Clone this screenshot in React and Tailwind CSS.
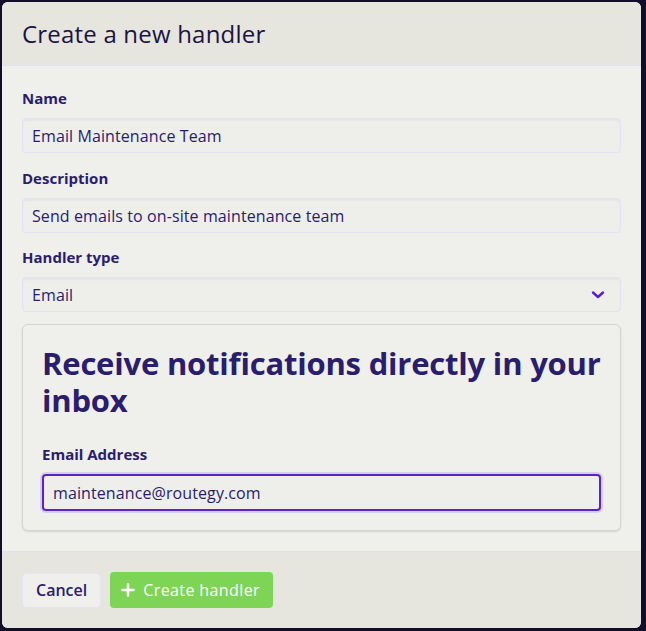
import React from "react";

const font = { fontFamily: "'Open Sans', 'Noto Sans', sans-serif" };

function Label({ children, className = "" }) {
  return (
    <div className={"text-[15px] font-bold text-[#2a1d6e] leading-[20px] " + className}>{children}</div>
  );
}

function Field({ children, right }) {
  return (
    <div className="h-[35px] rounded-[4px] border border-[#e4e0f6] bg-[#eeeeea] shadow-[inset_0_2px_2px_rgba(0,0,0,0.04)] flex items-center px-[9px] text-[16px] font-medium text-[#2a1d6e]">
      <span className="flex-1 tracking-[0.1px]">{children}</span>
      {right}
    </div>
  );
}

export default function App() {
  return (
    <div className="w-[646px] h-[631px] bg-[#120e29] p-[2px] pr-[5px] pb-[3px]" style={font}>
      <div className="w-full h-full rounded-[6px] overflow-hidden flex flex-col bg-[#efefeb]">
        <div className="h-[64px] bg-[#e6e6df] border-b border-[#e2def4] flex items-center px-[20px]">
          <h1 className="text-[24px] text-[#1b1442] font-normal tracking-[0.2px]">Create a new handler</h1>
        </div>
        <div className="flex-1 px-[20px] pt-[22px] flex flex-col">
          <Label>Name</Label>
          <div className="mt-[10px]"><Field>Email Maintenance Team</Field></div>
          <Label className="mt-[15px]">Description</Label>
          <div className="mt-[10px]"><Field>Send emails to on-site maintenance team</Field></div>
          <Label className="mt-[14px]">Handler type</Label>
          <div className="mt-[10px]">
            <Field
              right={
                <svg width="14" height="10" viewBox="0 0 14 10" className="mr-[6px]">
                  <path d="M2 2.5 L7 7 L12 2.5" fill="none" stroke="#5b1fd0" strokeWidth="2.4" strokeLinecap="round" strokeLinejoin="round" />
                </svg>
              }
            >
              Email
            </Field>
          </div>
          <div className="mt-[12px] rounded-[6px] border border-[#d6d6d1] bg-[#efefeb] shadow-[0_1px_2px_rgba(0,0,0,0.12)] px-[19px] pt-[20px] pb-[19px]">
            <h2 className="text-[31px] leading-[37px] font-bold text-[#2a1d6e] tracking-[-0.2px]">Receive notifications directly in your inbox</h2>
            <Label className="mt-[25px]">Email Address</Label>
            <div className="mt-[10px] h-[37px] rounded-[4px] border-2 border-[#5a22c9] ring-2 ring-[#d9cdee] bg-[#eeeeea] flex items-center px-[9px] text-[16px] font-medium text-[#2a1d6e] tracking-[0.1px]">
              maintenance@routegy.com
            </div>
          </div>
        </div>
        <div className="h-[77px] bg-[#e6e6df] border-t border-[#e2def4] flex items-center px-[20px] gap-[9px] mt-[19px]">
          <button className="h-[35px] px-[13px] rounded-[4px] border border-[#e7e3f7] bg-[#efefeb] text-[16px] font-semibold text-[#2a1d6e]">Cancel</button>
          <button className="h-[36px] pl-[11px] pr-[13px] rounded-[4px] bg-[#7ed455] text-[16px] text-white flex items-center gap-[8px] font-medium tracking-[0.4px]">
            <svg width="14" height="14" viewBox="0 0 14 14">
              <path d="M7 1.5 V12.5 M1.5 7 H12.5" stroke="white" strokeWidth="2.6" strokeLinecap="round" />
            </svg>
            Create handler
          </button>
        </div>
      </div>
    </div>
  );
}
